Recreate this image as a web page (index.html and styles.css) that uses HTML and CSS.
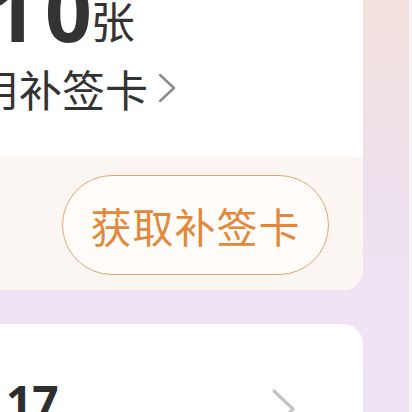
FILE: index.html
```html
<!DOCTYPE html>
<html lang="zh">
<head>
<meta charset="utf-8">
<link rel="stylesheet" href="styles.css">
</head>
<body>
<div class="screen">
  <div class="column">
    <section class="card card-main">
      <div class="card-top">
        <div class="count"><span class="num"><span class="d1">1</span>0</span><span class="unit">张</span></div>
        <div class="link-row"><span class="link-text">使用补签卡</span><svg class="chev" viewBox="0 0 18 30" width="18" height="30"><path d="M2 2 L16 15 L2 28" fill="none" stroke="#8a8a8a" stroke-width="2.4" stroke-linecap="round" stroke-linejoin="round"/></svg></div>
      </div>
      <div class="card-bottom">
        <button class="btn-get">获取补签卡</button>
      </div>
    </section>
    <section class="card card-second">
      <span class="num2">17</span>
      <svg class="chev2" viewBox="0 0 26 40" width="26" height="40"><path d="M3 3 L22 21 L3 39" fill="none" stroke="#c4c4c4" stroke-width="3.2" stroke-linecap="round" stroke-linejoin="round"/></svg>
    </section>
  </div>
  <div class="edge"></div>
</div>
</body>
</html>
```

FILE: styles.css
```css
* { box-sizing: border-box; }
html, body { margin: 0; padding: 0; }
body { width: 412px; height: 412px; overflow: hidden; font-family: "Noto Sans", "Noto Sans CJK SC", sans-serif; }

.screen {
  width: 412px;
  height: 412px;
  overflow: hidden;
  display: grid;
  grid-template-columns: 409px 3px;
  background: linear-gradient(180deg, #f3e2dc 0px, #eee1ea 150px, #efe3f5 300px, #efe4f6 412px);
}

.column {
  display: flex;
  flex-direction: column;
  gap: 34px;
  margin-top: -60px;
  margin-left: -80px;
  width: 443px;
}

.edge { background: #f8f4f8; }

.card {
  background: #ffffff;
  border-radius: 20px;
  overflow: hidden;
}

.card-top {
  height: 217px;
  padding-top: 30px;
  padding-left: 20px;
}

.count {
  display: flex;
  align-items: flex-start;
  height: 80px;
  color: #333333;
  padding-left: 50px;
}
.num {
  font-family: "Noto Sans", sans-serif;
  font-weight: 700;
  font-size: 82px;
  line-height: 80px;
}
.d1 { letter-spacing: 8px; }
.unit {
  font-family: "Noto Sans CJK SC", sans-serif;
  font-size: 44px;
  line-height: 44px;
  margin-top: 28px;
  margin-left: -1px;
}

.link-row {
  display: flex;
  align-items: center;
  margin-top: 15px;
  height: 46px;
  margin-left: -7px;
}
.link-text {
  font-family: "Noto Sans CJK SC", sans-serif;
  font-size: 43px;
  line-height: 46px;
  color: #333333;
}
.chev { margin-left: 10px; }

.card-bottom {
  background: #fbf6f2;
  height: 133px;
  display: flex;
  justify-content: flex-end;
  align-items: flex-start;
  padding: 18px 34px 0 0;
}

.btn-get {
  width: 267px;
  height: 100px;
  border-radius: 50px;
  border: 1.5px solid #dfa66e;
  background: #fffcf9;
  color: #e3883a;
  font-family: "Noto Sans CJK SC", sans-serif;
  font-size: 41px;
  letter-spacing: 1px;
  padding: 0;
}

.card-second {
  height: 200px;
  display: flex;
  align-items: flex-start;
  padding-left: 86px;
  padding-top: 54px;
}
.num2 {
  font-family: "Noto Sans", sans-serif;
  font-weight: 700;
  font-size: 46px;
  line-height: 46px;
  color: #2e2e2e;
}
.chev2 { margin-left: 212px; margin-top: 10px; }
```
